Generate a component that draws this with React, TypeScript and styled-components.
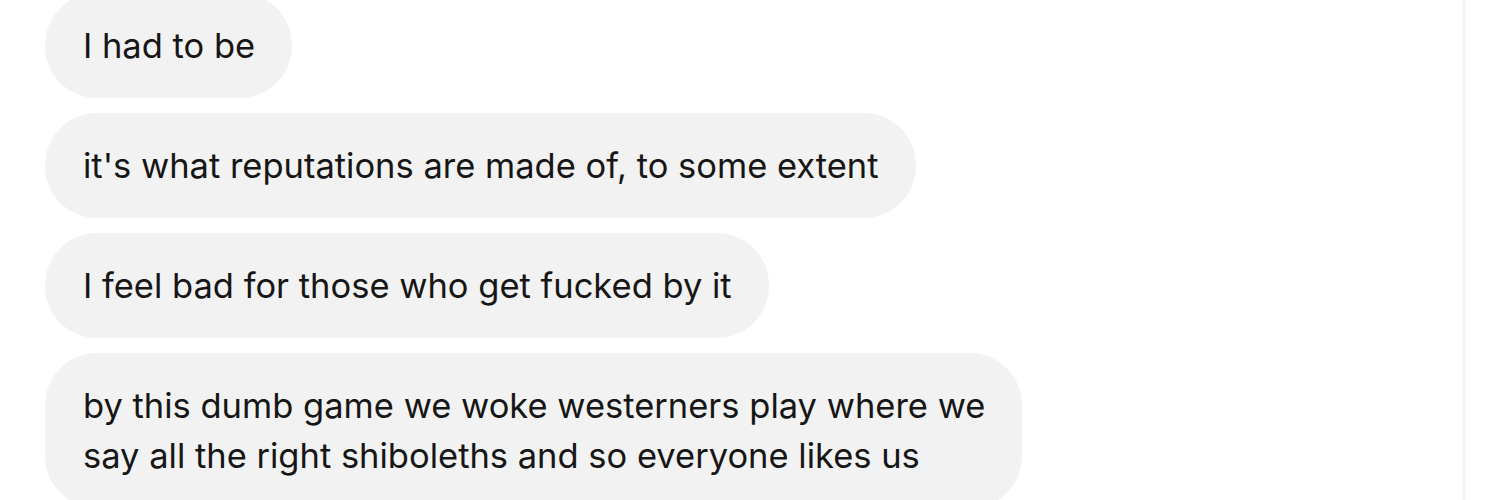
import React, { FC } from 'react'
import styled, { createGlobalStyle } from 'styled-components'

const Global = createGlobalStyle`
  html, body {
    margin: 0;
    padding: 0;
    background: #fff;
  }
`

const Page = styled.div`
  display: flex;
  width: 1500px;
  height: 500px;
  overflow: hidden;
  background: #fff;
`

const Thread = styled.div`
  display: flex;
  flex-direction: column;
  align-items: flex-start;
  gap: 15px;
  width: 1462px;
  margin-top: -7px;
  padding-left: 45px;
  box-sizing: border-box;
`

const Divider = styled.div`
  width: 4px;
  height: 100%;
  background: #f6f6f6;
`

const Bubble = styled.div`
  padding: 28px 37px 27px 38px;
  border-radius: 52px;
  background: #f2f2f2;
  color: #161616;
  font-family: Inter, 'Noto Sans', sans-serif;
  font-size: 34.5px;
  line-height: 50px;
`

const messages = [
  ['I had to be'],
  ["it's what reputations are made of, to some extent"],
  ['I feel bad for those who get fucked by it'],
  [
    'by this dumb game we woke westerners play where we',
    'say all the right shiboleths and so everyone likes us',
  ],
]

const App: FC = () => {
  return (
    <Page>
      <Global />
      <Thread>
        {messages.map((lines, i) => (
          <Bubble key={i}>
            {lines.map((l, j) => (
              <div key={j}>{l}</div>
            ))}
          </Bubble>
        ))}
      </Thread>
      <Divider />
    </Page>
  )
}

export default App
